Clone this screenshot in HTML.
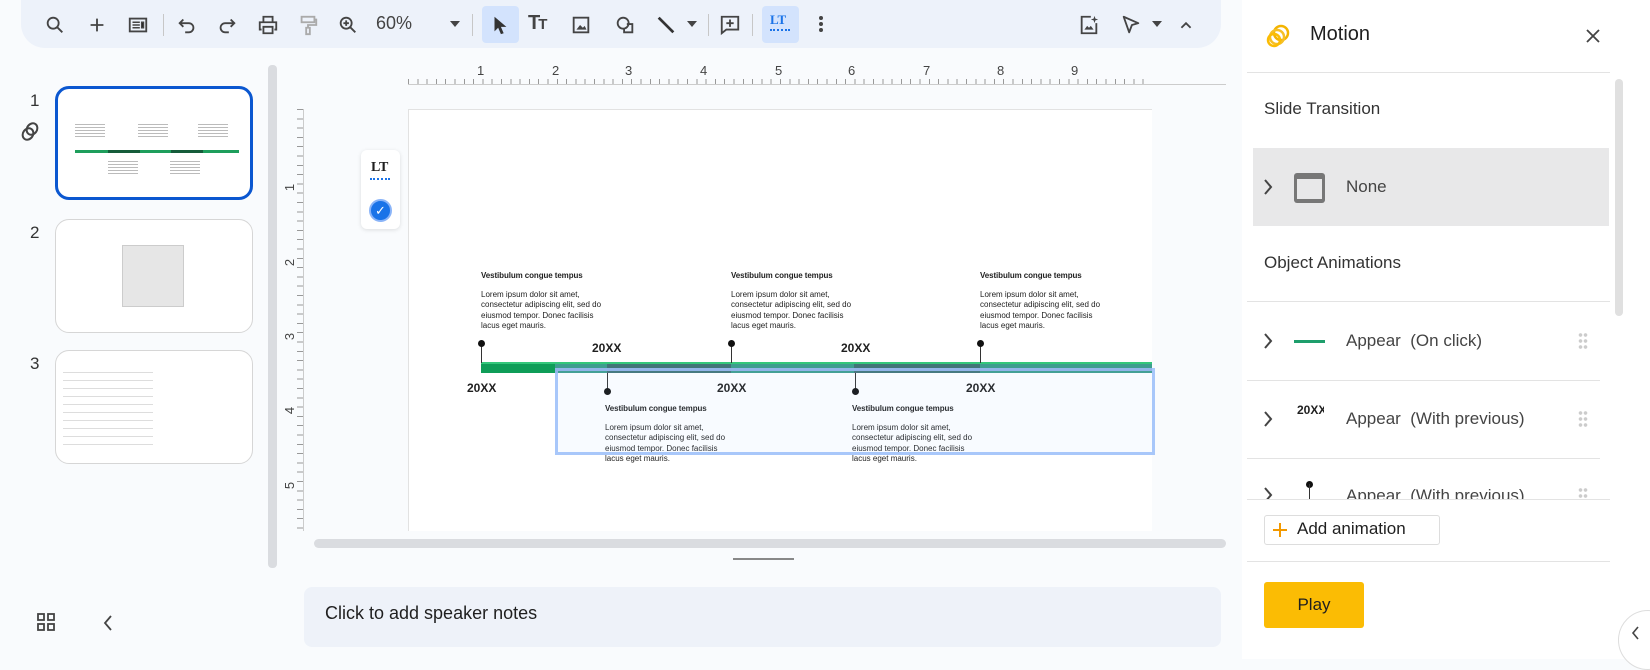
<!DOCTYPE html>
<html><head><meta charset="utf-8"><style>
*{margin:0;padding:0;box-sizing:border-box}
body{width:1650px;height:659px;overflow:hidden;background:#f9fbfd;font-family:"Liberation Sans",sans-serif;position:relative;color:#1f1f1f}
.a{position:absolute}
.tb{left:21px;top:0;width:1200px;height:48px;background:#edf2fa;border-radius:0 0 24px 24px}
.ic{position:absolute;top:14px;width:22px;height:22px}
.sep{position:absolute;top:14px;width:1px;height:22px;background:#c7c7c7}
.rp{left:1242px;top:0;width:408px;height:659px;background:#fff}
.st{font-size:8px;font-weight:bold;font-family:"Liberation Sans Narrow","Liberation Sans",sans-serif;letter-spacing:-.1px}
.bd{font-size:8px;line-height:10.3px;font-family:"Liberation Sans Narrow","Liberation Sans",sans-serif;color:#222}
.yr{font-size:12px;font-weight:bold;font-family:"Liberation Sans Narrow","Liberation Sans",sans-serif}
.dot{position:absolute;width:7px;height:7px;border-radius:50%;background:#111}
.stem{position:absolute;width:1px;background:#333}
.rn{position:absolute;font-size:13px;color:#444}
.th{position:absolute;left:55px;width:198px;height:114px;border:1px solid #d6d6d6;border-radius:14px;background:#fff}
.num{position:absolute;left:30px;font-size:17px;color:#333}
.row{position:absolute;left:1346px;font-size:17px;color:#444}
.chev{position:absolute;left:1262px;width:12px;height:18px}
.grip{position:absolute;left:1578px;width:10px;height:18px;background:radial-gradient(circle,#ccc 1.6px,transparent 2px) 0 0/5px 6px}
</style></head><body>

<div class="a tb"></div>
<svg class="ic" style="left:44px" viewBox="0 0 24 24"><circle cx="10" cy="10" r="6" fill="none" stroke="#444" stroke-width="2"/><path d="M14.5 14.5L20 20" stroke="#444" stroke-width="2"/></svg>
<svg class="ic" style="left:86px" viewBox="0 0 24 24"><path d="M12 5v14M5 12h14" stroke="#444" stroke-width="2"/></svg>
<svg class="ic" style="left:127px" viewBox="0 0 24 24"><rect x="3" y="5" width="18" height="14" fill="none" stroke="#444" stroke-width="2"/><path d="M6 9h8M6 12h8M6 15h8M16 9h2v6h-2z" stroke="#444" stroke-width="1.6"/></svg>
<div class="sep" style="left:163px"></div>
<svg class="ic" style="left:176px" viewBox="0 0 24 24"><path d="M8 6L4 10l4 4M4 10h10a5 5 0 010 10h-4" fill="none" stroke="#444" stroke-width="2"/></svg>
<svg class="ic" style="left:216px" viewBox="0 0 24 24"><path d="M16 6l4 4-4 4M20 10H10a5 5 0 000 10h4" fill="none" stroke="#444" stroke-width="2"/></svg>
<svg class="ic" style="left:257px" viewBox="0 0 24 24"><path d="M7 8V3h10v5M5 17H3V9h18v8h-2M7 14h10v7H7z" fill="none" stroke="#444" stroke-width="2"/></svg>
<svg class="ic" style="left:297px" viewBox="0 0 24 24"><rect x="5" y="3" width="14" height="6" fill="none" stroke="#aaa" stroke-width="2"/><path d="M19 6h2v6h-9v3M10 15h4v7h-4z" fill="none" stroke="#aaa" stroke-width="2"/></svg>
<svg class="ic" style="left:337px" viewBox="0 0 24 24"><circle cx="10" cy="10" r="6" fill="none" stroke="#444" stroke-width="2"/><path d="M14.5 14.5L20 20M10 7v6M7 10h6" stroke="#444" stroke-width="2"/></svg>
<div class="a" style="left:376px;top:13px;font-size:18px;color:#444">60%</div>
<div class="a" style="left:450px;top:21px;border:5px solid transparent;border-top:6px solid #444"></div>
<div class="sep" style="left:472px"></div>
<div class="a" style="left:482px;top:6px;width:37px;height:37px;background:#d3e3fd;border-radius:4px"></div>
<svg class="ic" style="left:489px" viewBox="0 0 24 24"><path d="M6 3v16l4-4 3 7 3-1-3-7h6z" fill="#333"/></svg>
<div class="a" style="left:528px;top:12px;font-size:20px;font-weight:bold;color:#444;letter-spacing:-2px">T<span style="font-size:15px">T</span></div>
<svg class="ic" style="left:570px" viewBox="0 0 24 24"><rect x="4" y="4" width="16" height="16" fill="none" stroke="#444" stroke-width="2"/><path d="M7 17l4-5 3 3 2-2 2 4z" fill="#444"/></svg>
<svg class="ic" style="left:614px" viewBox="0 0 24 24"><circle cx="10" cy="10" r="6" fill="none" stroke="#444" stroke-width="2"/><path d="M14 11h6v9h-9v-4" fill="none" stroke="#444" stroke-width="2"/></svg>
<svg class="ic" style="left:655px" viewBox="0 0 24 24"><path d="M4 4l16 16" stroke="#333" stroke-width="3"/></svg>
<div class="a" style="left:687px;top:21px;border:5px solid transparent;border-top:6px solid #444"></div>
<div class="sep" style="left:708px"></div>
<svg class="ic" style="left:719px" viewBox="0 0 24 24"><path d="M3 3h18v14H8l-5 4z" fill="none" stroke="#444" stroke-width="2"/><path d="M12 6v8M8 10h8" stroke="#444" stroke-width="2"/></svg>
<div class="sep" style="left:752px"></div>
<div class="a" style="left:762px;top:6px;width:37px;height:37px;background:#d3e3fd;border-radius:4px"></div>
<div class="a" style="left:770px;top:12px;font-size:13px;font-weight:bold;color:#1a73e8;font-family:'Liberation Serif',serif">LT</div>
<div class="a" style="left:770px;top:27px;width:20px;height:4px;border-bottom:2px dotted #1a73e8"></div>
<div class="a" style="left:819px;top:16px;width:4px;height:4px;background:#444;border-radius:50%;box-shadow:0 6px #444,0 12px #444"></div>
<svg class="ic" style="left:1078px" viewBox="0 0 24 24"><path d="M14 3H4v18h16V10" fill="none" stroke="#444" stroke-width="2"/><path d="M7 17l3-4 2 2 2-2 3 4z" fill="#444"/><path d="M18 2l1 3 3 1-3 1-1 3-1-3-3-1 3-1z" fill="#444"/></svg>
<svg class="ic" style="left:1120px" viewBox="0 0 24 24"><path d="M4 3l16 7-7 2-3 8z" fill="none" stroke="#444" stroke-width="2" stroke-linejoin="round"/></svg>
<div class="a" style="left:1152px;top:21px;border:5px solid transparent;border-top:6px solid #444"></div>
<svg class="ic" style="left:1175px" viewBox="0 0 24 24"><path d="M7 15l5-5 5 5" fill="none" stroke="#444" stroke-width="2"/></svg>

<div class="num" style="top:91px">1</div>
<div class="num" style="top:223px">2</div>
<div class="num" style="top:354px">3</div>
<svg class="a" style="left:18px;top:120px" width="24" height="24" viewBox="0 0 24 24"><g fill="none" stroke="#444" stroke-width="2"><ellipse cx="14" cy="9" rx="5" ry="6" transform="rotate(35 14 9)"/><ellipse cx="10" cy="14" rx="5" ry="6" transform="rotate(35 10 14)"/></g></svg>
<div class="th" style="top:86px;border:3px solid #0b57d0">
 <div class="a" style="left:17px;top:61px;width:164px;height:3px;background:#1e9e5c"></div>
 <div class="a" style="left:50px;top:61px;width:32px;height:3px;background:#155c3a"></div>
 <div class="a" style="left:113px;top:61px;width:32px;height:3px;background:#155c3a"></div>
 <div class="a" style="left:17px;top:35px;width:30px;height:14px;background:repeating-linear-gradient(#bbb 0 1px,transparent 1px 3px)"></div>
 <div class="a" style="left:80px;top:35px;width:30px;height:14px;background:repeating-linear-gradient(#bbb 0 1px,transparent 1px 3px)"></div>
 <div class="a" style="left:140px;top:35px;width:30px;height:14px;background:repeating-linear-gradient(#bbb 0 1px,transparent 1px 3px)"></div>
 <div class="a" style="left:50px;top:72px;width:30px;height:14px;background:repeating-linear-gradient(#bbb 0 1px,transparent 1px 3px)"></div>
 <div class="a" style="left:112px;top:72px;width:30px;height:14px;background:repeating-linear-gradient(#bbb 0 1px,transparent 1px 3px)"></div>
</div>
<div class="th" style="top:219px"><div class="a" style="left:66px;top:25px;width:62px;height:62px;background:#e6e6e6;border:1px solid #ccc"></div></div>
<div class="th" style="top:350px"><div class="a" style="left:7px;top:14px;width:90px;height:80px;background:repeating-linear-gradient(#fff 0 7px,#ddd 7px 8px)"></div></div>
<div class="a" style="left:268px;top:65px;width:9px;height:503px;background:#dadce0;border-radius:4px"></div>
<svg class="a" style="left:36px;top:612px" width="20" height="20" viewBox="0 0 20 20"><g fill="none" stroke="#444" stroke-width="1.8"><rect x="2" y="2" width="6" height="6"/><rect x="12" y="2" width="6" height="6"/><rect x="2" y="12" width="6" height="6"/><rect x="12" y="12" width="6" height="6"/></g></svg>
<svg class="a" style="left:102px;top:614px" width="12" height="18" viewBox="0 0 12 18"><path d="M9 2L3 9l6 7" fill="none" stroke="#444" stroke-width="1.8"/></svg>

<div class="a" style="left:304px;top:84px;width:922px;height:447px;background:#f9fbfd"></div>
<div class="a" style="left:408px;top:65px;width:744px;height:19px;background:repeating-linear-gradient(90deg,#999 0 1px,transparent 1px 9.3px);-webkit-mask:linear-gradient(#000,#000) bottom/100% 5px no-repeat;mask:linear-gradient(#000,#000) bottom/100% 5px no-repeat"></div>
<div class="a" style="left:408px;top:84px;width:818px;height:1px;background:#ccc"></div>
<div class="rn" style="left:477px;top:63px">1</div><div class="rn" style="left:552px;top:63px">2</div><div class="rn" style="left:625px;top:63px">3</div><div class="rn" style="left:700px;top:63px">4</div><div class="rn" style="left:775px;top:63px">5</div><div class="rn" style="left:848px;top:63px">6</div><div class="rn" style="left:923px;top:63px">7</div><div class="rn" style="left:997px;top:63px">8</div><div class="rn" style="left:1071px;top:63px">9</div>
<div class="a" style="left:303px;top:109px;width:1px;height:422px;background:#ccc"></div>
<div class="a" style="left:297px;top:109px;width:6px;height:422px;background:repeating-linear-gradient(#999 0 1px,transparent 1px 9.3px)"></div>
<div class="rn" style="left:286px;top:180px;transform:rotate(-90deg)">1</div>
<div class="rn" style="left:286px;top:255px;transform:rotate(-90deg)">2</div>
<div class="rn" style="left:286px;top:329px;transform:rotate(-90deg)">3</div>
<div class="rn" style="left:286px;top:403px;transform:rotate(-90deg)">4</div>
<div class="rn" style="left:286px;top:478px;transform:rotate(-90deg)">5</div>
<div class="a" style="left:408px;top:109px;width:744px;height:422px;background:#fff;border-left:1px solid #e2e2e2;border-top:1px solid #e2e2e2"></div>

<div class="a" style="left:361px;top:150px;width:39px;height:79px;background:#fff;border-radius:6px;box-shadow:0 1px 4px rgba(0,0,0,.12)"></div>
<div class="a" style="left:371px;top:160px;font-size:14px;font-weight:bold;font-family:'Liberation Serif',serif">LT</div>
<div class="a" style="left:370px;top:177px;width:20px;height:3px;border-bottom:2px dotted #1a73e8"></div>
<div class="a" style="left:369px;top:199px;width:23px;height:23px;border-radius:50%;background:#1a73e8;border:2px solid #8ab4f8;color:#fff;font-size:13px;text-align:center;line-height:19px">✓</div>

<div class="a st" style="left:481px;top:271px">Vestibulum congue tempus</div>
<div class="a bd" style="left:481px;top:290px">Lorem ipsum dolor sit amet,<br>consectetur adipiscing elit, sed do<br>eiusmod tempor. Donec facilisis<br>lacus eget mauris.</div>
<div class="a st" style="left:731px;top:271px">Vestibulum congue tempus</div>
<div class="a bd" style="left:731px;top:290px">Lorem ipsum dolor sit amet,<br>consectetur adipiscing elit, sed do<br>eiusmod tempor. Donec facilisis<br>lacus eget mauris.</div>
<div class="a st" style="left:980px;top:271px">Vestibulum congue tempus</div>
<div class="a bd" style="left:980px;top:290px">Lorem ipsum dolor sit amet,<br>consectetur adipiscing elit, sed do<br>eiusmod tempor. Donec facilisis<br>lacus eget mauris.</div>

<div class="a" style="left:481px;top:362px;width:671px;height:11px;background:#0f9d58;border-top:2px solid #34c77b"></div>
<div class="a" style="left:607px;top:364px;width:124px;height:9px;background:#14532f"></div>
<div class="a" style="left:854px;top:364px;width:126px;height:9px;background:#14532f"></div>
<div class="stem" style="left:481px;top:344px;height:19px"></div><div class="dot" style="left:478px;top:340px"></div>
<div class="stem" style="left:731px;top:344px;height:19px"></div><div class="dot" style="left:728px;top:340px"></div>
<div class="stem" style="left:980px;top:344px;height:19px"></div><div class="dot" style="left:977px;top:340px"></div>
<div class="stem" style="left:607px;top:372px;height:20px"></div><div class="dot" style="left:604px;top:388px"></div>
<div class="stem" style="left:855px;top:372px;height:20px"></div><div class="dot" style="left:852px;top:388px"></div>
<div class="a yr" style="left:592px;top:341px">20XX</div>
<div class="a yr" style="left:841px;top:341px">20XX</div>
<div class="a yr" style="left:467px;top:381px">20XX</div>
<div class="a yr" style="left:717px;top:381px">20XX</div>
<div class="a yr" style="left:966px;top:381px">20XX</div>
<div class="a st" style="left:605px;top:404px">Vestibulum congue tempus</div>
<div class="a bd" style="left:605px;top:423px">Lorem ipsum dolor sit amet,<br>consectetur adipiscing elit, sed do<br>eiusmod tempor. Donec facilisis<br>lacus eget mauris.</div>
<div class="a st" style="left:852px;top:404px">Vestibulum congue tempus</div>
<div class="a bd" style="left:852px;top:423px">Lorem ipsum dolor sit amet,<br>consectetur adipiscing elit, sed do<br>eiusmod tempor. Donec facilisis<br>lacus eget mauris.</div>
<div class="a" style="left:555px;top:368px;width:600px;height:87px;border:3px solid #a8c7fa;background:rgba(168,199,250,.08)"></div>
<div class="a" style="left:555px;top:364px;width:597px;height:9px;background:rgba(120,160,210,.45)"></div>

<div class="a" style="left:314px;top:539px;width:912px;height:9px;background:#dadce0;border-radius:5px"></div>
<div class="a" style="left:733px;top:558px;width:61px;height:2px;background:#888"></div>
<div class="a" style="left:304px;top:587px;width:917px;height:60px;background:#eef2f9;border-radius:8px"></div>
<div class="a" style="left:325px;top:603px;font-size:18px;color:#1f1f1f">Click to add speaker notes</div>

<div class="a rp"></div>
<svg class="a" style="left:1264px;top:22px" width="28" height="28" viewBox="0 0 28 28"><g fill="none" stroke="#f4b400" stroke-width="2.5"><circle cx="17" cy="11" r="7"/><circle cx="13" cy="15" r="7" stroke="#f6c026"/><circle cx="10" cy="18" r="6" stroke="#fbbc04"/></g></svg>
<div class="a" style="left:1310px;top:23px;font-size:20px;color:#1f1f1f">Motion</div>
<svg class="a" style="left:1585px;top:28px" width="16" height="16" viewBox="0 0 16 16"><path d="M2 2l12 12M14 2L2 14" stroke="#444" stroke-width="1.8"/></svg>
<div class="a" style="left:1247px;top:72px;width:363px;height:1px;background:#e3e3e3"></div>
<div class="a" style="left:1615px;top:79px;width:8px;height:237px;background:#e0e0e0;border-radius:4px"></div>
<div class="a" style="left:1264px;top:99px;font-size:17px;color:#333">Slide Transition</div>
<div class="a" style="left:1253px;top:148px;width:356px;height:78px;background:#e8e8e9"></div>
<svg class="chev" style="top:178px" viewBox="0 0 12 18"><path d="M3 2l6 7-6 7" fill="none" stroke="#444" stroke-width="2"/></svg>
<div class="a" style="left:1294px;top:173px;width:31px;height:30px;background:#777;border-radius:3px;padding:6px 3px 3px"><div style="width:25px;height:20px;background:#e8e8e9"></div></div>
<div class="a" style="left:1346px;top:177px;font-size:17px;color:#444">None</div>
<div class="a" style="left:1264px;top:253px;font-size:17px;color:#333">Object Animations</div>
<div class="a" style="left:1247px;top:301px;width:363px;height:1px;background:#e3e3e3"></div>
<svg class="chev" style="top:332px" viewBox="0 0 12 18"><path d="M3 2l6 7-6 7" fill="none" stroke="#444" stroke-width="2"/></svg>
<div class="a" style="left:1294px;top:340px;width:31px;height:3px;background:#1e9e6c"></div>
<div class="row" style="top:331px">Appear&nbsp;&nbsp;(On click)</div>
<div class="grip" style="top:332px"></div>
<div class="a" style="left:1247px;top:380px;width:353px;height:1px;background:#e3e3e3"></div>
<svg class="chev" style="top:410px" viewBox="0 0 12 18"><path d="M3 2l6 7-6 7" fill="none" stroke="#444" stroke-width="2"/></svg>
<div class="a" style="left:1297px;top:403px;font-size:12px;font-weight:bold;width:27px;overflow:hidden;white-space:nowrap">20XX</div>
<div class="row" style="top:409px">Appear&nbsp;&nbsp;(With previous)</div>
<div class="grip" style="top:410px"></div>
<div class="a" style="left:1247px;top:458px;width:353px;height:1px;background:#e3e3e3"></div>
<div class="a" style="left:1247px;top:459px;width:363px;height:40px;overflow:hidden">
 <svg class="a" style="left:15px;top:27px" width="12" height="18" viewBox="0 0 12 18"><path d="M3 2l6 7-6 7" fill="none" stroke="#444" stroke-width="2"/></svg>
 <div class="dot" style="left:59px;top:22px"></div><div class="stem" style="left:62px;top:25px;height:15px"></div>
 <div class="row" style="left:99px;top:27px">Appear&nbsp;&nbsp;(With previous)</div>
 <div class="grip" style="left:331px;top:28px"></div>
</div>
<div class="a" style="left:1247px;top:499px;width:363px;height:1px;background:#e3e3e3"></div>
<div class="a" style="left:1264px;top:515px;width:176px;height:30px;border:1px solid #ddd;border-radius:3px;background:#fff"></div>
<svg class="a" style="left:1272px;top:522px" width="16" height="16" viewBox="0 0 16 16"><path d="M8 1v14M1 8h14" stroke="#f29900" stroke-width="2"/></svg>
<div class="a" style="left:1297px;top:519px;font-size:17px;color:#1f1f1f">Add animation</div>
<div class="a" style="left:1247px;top:561px;width:363px;height:1px;background:#e3e3e3"></div>
<div class="a" style="left:1264px;top:582px;width:100px;height:46px;background:#fbbc04;border-radius:3px;font-size:17px;text-align:center;line-height:46px;color:#1f1f1f">Play</div>
<div class="a" style="left:1618px;top:610px;width:60px;height:60px;border-radius:50%;background:#fff;border:1px solid #ddd"></div>
<svg class="a" style="left:1630px;top:625px" width="10" height="16" viewBox="0 0 10 16"><path d="M8 2L3 8l5 6" fill="none" stroke="#444" stroke-width="1.6"/></svg>
</body></html>
